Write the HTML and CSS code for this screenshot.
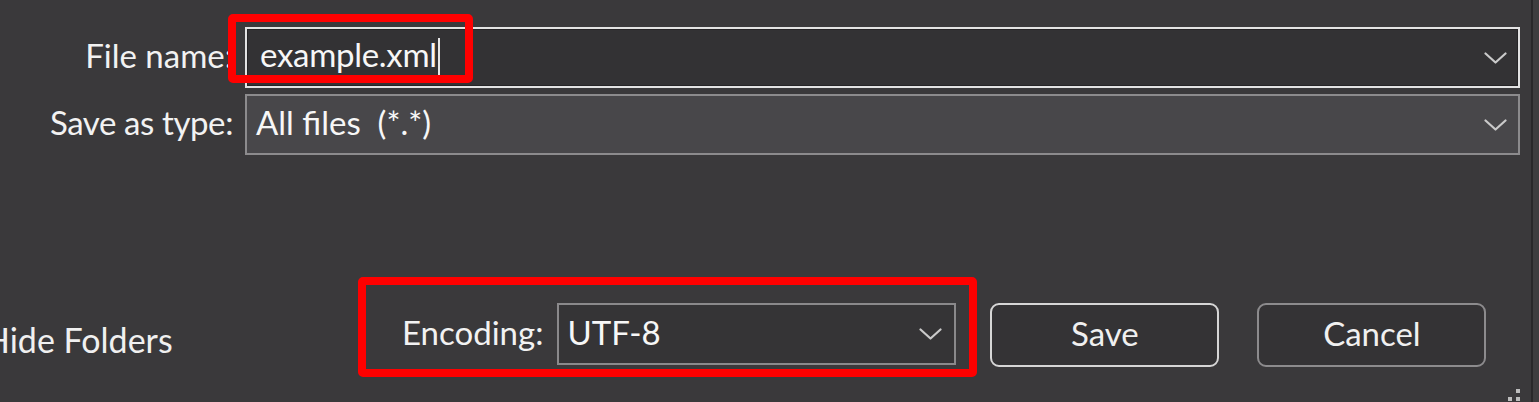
FILE: index.html
```html
<!DOCTYPE html>
<html lang="en">
<head>
<meta charset="utf-8">
<title>Save As</title>
<link rel="stylesheet" href="styles.css">
</head>
<body>
<div class="dialog">
  <div class="fields">
    <label class="lbl">File name:</label>
    <div class="combo combo-edit">
      <span class="val val-edit">example.xml<span class="caret"></span></span>
      <svg class="chev" width="23" height="12" viewBox="0 0 23 12"><polyline points="1.5,1.5 11.5,10.5 21.5,1.5"/></svg>
    </div>
    <label class="lbl">Save as type:</label>
    <div class="combo combo-type">
      <span class="val val-type">All files&nbsp; (*.*)</span>
      <svg class="chev" width="23" height="12" viewBox="0 0 23 12"><polyline points="1.5,1.5 11.5,10.5 21.5,1.5"/></svg>
    </div>
  </div>
  <div class="hl hl-name"></div>

  <div class="footer">
    <span class="hide">Hide Folders</span>
    <div class="enc-wrap">
      <span class="enc-lbl">Encoding:</span>
      <div class="combo combo-enc">
        <span class="val val-enc">UTF-8</span>
        <svg class="chev" width="23" height="12" viewBox="0 0 23 12"><polyline points="1.5,1.5 11.5,10.5 21.5,1.5"/></svg>
      </div>
    </div>
    <button class="btn btn-save">Save</button>
    <button class="btn btn-cancel">Cancel</button>
  </div>

  <svg class="grip" width="20" height="18" viewBox="0 0 20 18">
    <rect x="9" y="2" width="4" height="4"/>
    <rect x="1" y="10" width="4" height="4"/>
    <rect x="9" y="10" width="4" height="4"/>
  </svg>
</div>
</body>
</html>
```

FILE: styles.css
```css
html, body {
  margin: 0;
  padding: 0;
  background: #3e3d3f;
  overflow: hidden;
}

.dialog {
  position: relative;
  width: 1531px;
  height: 402px;
  background: #3a393b;
  border-right: 2px solid #29282a;
  font-family: "Lato", "Open Sans", sans-serif;
  font-size: 33px;
  color: #f2f2f2;
  overflow: hidden;
}

.fields {
  display: grid;
  grid-template-columns: 245px 1275px;
  grid-auto-rows: 61px;
  row-gap: 6px;
  padding-top: 27px;
}

.lbl {
  align-self: center;
  text-align: right;
  padding-right: 12px;
  padding-bottom: 5px;
  white-space: nowrap;
}

.lbl:nth-of-type(2) {
  letter-spacing: -0.4px;
}

.combo {
  box-sizing: border-box;
  display: flex;
  align-items: center;
  padding-right: 11px;
}

.combo .chev {
  margin-left: auto;
  flex: none;
}

.chev polyline {
  fill: none;
  stroke: #cacaca;
  stroke-width: 2.2;
  stroke-linecap: round;
  stroke-linejoin: round;
}

.val {
  white-space: nowrap;
  padding-bottom: 5px;
  color: #f7f7f7;
}

.combo-edit {
  border: 2px solid #e3e3e3;
  background: #333234;
  box-shadow: inset 0 0 0 1px #252426;
}

.val-edit {
  padding-left: 13px;
  letter-spacing: -0.3px;
}

.caret {
  display: inline-block;
  width: 2px;
  height: 38px;
  margin-left: 1px;
  vertical-align: -9px;
  background: #e6e6e6;
}

.combo-type {
  border: 2px solid #8c8b8d;
  background: #48474a;
}

.val-type {
  padding-left: 9px;
}

.hl {
  position: absolute;
  box-sizing: border-box;
  border: 8px solid #ff0000;
  border-radius: 5px;
}

.hl-name {
  left: 228px;
  top: 14px;
  width: 245px;
  height: 69px;
}

.footer {
  display: flex;
  align-items: flex-start;
  margin-top: 122px;
}

.hide {
  flex: 0 0 374px;
  margin-left: -16px;
  margin-top: 43px;
  font-size: 34px;
  line-height: 40px;
  white-space: nowrap;
  color: #f0f0f0;
}

.enc-wrap {
  box-sizing: border-box;
  display: flex;
  align-items: center;
  gap: 14px;
  height: 100px;
  padding: 18px 13px 4px 36px;
  border: 8px solid #ff0000;
  border-radius: 5px;
}

.enc-lbl {
  padding-bottom: 5px;
  white-space: nowrap;
}

.combo-enc {
  width: 399px;
  height: 62px;
  border: 2px solid #8a898b;
  background: #353436;
  padding-right: 12px;
}

.val-enc {
  padding-left: 8px;
}

.btn {
  box-sizing: border-box;
  width: 229px;
  height: 64px;
  margin-top: 26px;
  border-radius: 9px;
  background: #343335;
  font-family: inherit;
  font-size: 33px;
  color: #f0f0f0;
  padding: 0 0 5px;
}

.btn-save {
  margin-left: 13px;
  border: 2px solid #d6d6d6;
}

.btn-cancel {
  margin-left: 38px;
  border: 2px solid #8c8b8d;
}

.grip {
  position: absolute;
  right: 4px;
  bottom: -3px;
}

.grip rect {
  fill: #bdbdbd;
}
```
